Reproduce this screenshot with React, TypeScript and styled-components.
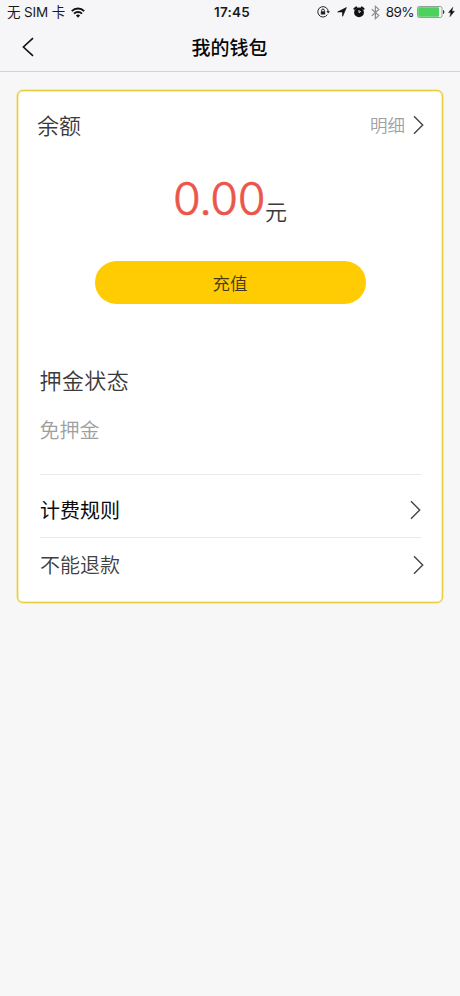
import React from "react";
import styled, { createGlobalStyle } from "styled-components";

const GlobalStyle = createGlobalStyle`
  * { box-sizing: border-box; }
  html, body { margin: 0; padding: 0; background: #f7f7f7; }
  body { font-family: "Noto Sans CJK SC", sans-serif; font-weight: 350; color: #3a3a3a; }
`;

const Screen = styled.div`
  width: 460px;
  height: 996px;
  background: #f7f7f7;
  overflow: hidden;
`;

const Header = styled.header`
  height: 72px;
  background: #f6f6f8;
  border-bottom: 1px solid #d3d3d5;
`;

const StatusBar = styled.div`
  display: grid;
  grid-template-columns: 1fr auto 1fr;
  align-items: center;
  height: 24px;
  padding: 0 5px 0 7px;
  color: #1a1a1a;
  font: 400 13.5px/24px Inter, "Noto Sans CJK SC", sans-serif;
`;

const Carrier = styled.div`
  display: flex;
  align-items: center;
  gap: 6px;
  letter-spacing: -0.15px;
  white-space: pre;
`;

const Clock = styled.div`
  padding-left: 2px;
  font-weight: 600;
  letter-spacing: 0.25px;
`;

const Indicators = styled.div`
  display: flex;
  align-items: center;
  justify-content: flex-end;
`;

const Percent = styled.span`
  margin: 0 3px 0 6px;
  letter-spacing: -0.55px;
`;

const Icon = styled.svg<{ $gap?: number }>`
  display: block;
  flex: none;
  margin-left: ${(p) => p.$gap ?? 0}px;
`;

const NavBar = styled.nav`
  display: grid;
  grid-template-columns: 60px 1fr 60px;
  align-items: center;
  height: 46px;
`;

const BackButton = styled.button`
  display: flex;
  width: 40px;
  padding: 0 0 1px 21px;
  border: 0;
  background: none;
`;

const Title = styled.h1`
  margin: 0 1px 0 0;
  text-align: center;
  color: #080808;
  font-size: 19px;
  line-height: 28px;
  font-weight: 500;
`;

const Card = styled.main`
  margin: 18px 17px 0;
  height: 513px;
  padding: 0 18px 0 19px;
  background: #fff;
  border: 1px solid #e9cf3e;
  border-radius: 6px;
  box-shadow: inset 0 0 0 0.5px #f0dc70, 0 0 0 0.5px #f0dc70;
`;

const BalanceHeader = styled.div`
  display: flex;
  align-items: center;
  justify-content: space-between;
  height: 68px;
`;

const Heading = styled.h2<{ $spacing?: number }>`
  margin: 0;
  padding-bottom: 2px;
  font-size: 22px;
  line-height: 32px;
  font-weight: 350;
  letter-spacing: ${(p) => p.$spacing ?? 0}px;
`;

const DetailLink = styled.div`
  display: flex;
  align-items: center;
  gap: 8px;
  color: #a0a0a0;
  font-size: 17.5px;
  line-height: 26px;
`;

const Amount = styled.div`
  display: flex;
  justify-content: center;
  align-items: baseline;
  height: 102px;
  padding: 12px 1px 0 0;
`;

const Figure = styled.span`
  color: #ec5549;
  font: 300 45px/56px Inter, sans-serif;
  letter-spacing: -0.45px;
  -webkit-text-stroke: 0.7px #ec5549;
`;

const Unit = styled.span`
  position: relative;
  top: 5px;
  font-size: 22px;
  line-height: 30px;
`;

const RechargeButton = styled.button`
  display: block;
  width: 271px;
  height: 43px;
  margin: 0 0 0 57.5px;
  padding: 0;
  border: 0;
  border-radius: 22px;
  background: #ffcb03;
  color: #443c18;
  font: 350 17.5px/43px "Noto Sans CJK SC", sans-serif;
`;

const Deposit = styled.section`
  margin: 0 3px 0 2.5px;
  height: 171px;
  padding-top: 59px;
  border-bottom: 1px solid #e9e9e9;
`;

const DepositState = styled.p`
  margin: 18px 0 0;
  color: #9e9e9e;
  font-size: 20px;
  line-height: 30px;
`;

const Row = styled.div<{ $tone: string; $height: number; $shift?: number; $weight?: number; $divided?: boolean }>`
  display: flex;
  align-items: center;
  justify-content: space-between;
  height: ${(p) => p.$height}px;
  margin: 0 ${(p) => p.$shift ?? 0}px 0 3px;
  padding-top: ${(p) => (p.$divided ? 7 : 0)}px;
  border-bottom: ${(p) => (p.$divided ? "1px solid #e9e9e9" : "0")};
  color: ${(p) => p.$tone};
  font-size: 20px;
  line-height: 30px;
  font-weight: ${(p) => p.$weight ?? 350};
`;

const Chevron = () => (
  <Icon width="11" height="20" viewBox="0 0 11 20" fill="none" stroke="#444" strokeWidth="1.4">
    <path d="M1 1.3 9.7 10 1 18.7" />
  </Icon>
);

const WifiIcon = () => (
  <Icon width="14" height="11" viewBox="0 0 14 11" fill="none" stroke="#111" strokeWidth="1.9">
    <path d="M.8 4.1a8.8 8.8 0 0 1 12.4 0M3 6.6a5.7 5.7 0 0 1 8 0" />
    <path d="M4.9 8.5a3 3 0 0 1 4.2 0L7 10.7Z" fill="#111" stroke="none" />
  </Icon>
);

const RotationLockIcon = () => (
  <Icon width="13" height="12" viewBox="0 0 13 12" fill="none" stroke="#222" strokeWidth="1">
    <path d="M10.4 8.6a5.2 5.2 0 1 1 .8-2.6" />
    <path d="M9.4 5.2h3.6l-1.8 2.3Z" fill="#222" stroke="none" />
    <path d="M4.7 5.5V4.3a1.3 1.3 0 0 1 2.6 0v1.2" />
    <path d="M3.8 5.3h4.4v3.2H3.8Z" fill="#222" stroke="none" />
  </Icon>
);

const LocationIcon = () => (
  <Icon $gap={7} width="10" height="10" viewBox="0 0 10 10" fill="#111" stroke="#111" strokeWidth=".7">
    <path d="M9.4.6 5.6 9.3V4.9H.7Z" />
  </Icon>
);

const AlarmIcon = () => (
  <Icon $gap={6} width="12" height="12" viewBox="0 0 12 12">
    <circle cx="6" cy="6.4" r="4.9" fill="#111" />
    <path d="M1.5 2.8 3.2 1.4M10.5 2.8 8.8 1.4" stroke="#111" strokeWidth="2" strokeLinecap="round" />
    <path d="M6 6.6V4M6 6.6 7.9 5.4" fill="none" stroke="#eee" strokeWidth="1" />
  </Icon>
);

const BluetoothIcon = () => (
  <Icon $gap={6} width="9" height="15" viewBox="0 0 9 15" fill="none" stroke="#8c8c8c" strokeWidth="1.2">
    <path d="M.8 4.2 7.8 10.6 4.4 13.7V1.3L7.8 4.4.8 10.8" />
  </Icon>
);

const BatteryIcon = () => (
  <Icon width="28" height="12" viewBox="0 0 28 12">
    <rect x=".5" y=".5" width="24.5" height="11" rx="1.8" fill="#f4f6f4" stroke="#8fa094" />
    <rect x="1.2" y="1.2" width="20.8" height="9.6" rx=".8" fill="#4cd15f" />
    <path d="M26 4c1.8.5 1.8 3.5 0 4Z" fill="#333" />
  </Icon>
);

const BoltIcon = () => (
  <Icon $gap={3} width="7" height="10" viewBox="0 0 7 10" fill="#111" stroke="#111" strokeWidth=".4">
    <path d="M4.8.3.5 5.6h2.3L1.9 9.7 6.5 4.2H3.9Z" />
  </Icon>
);

export default function App() {
  return (
    <>
      <GlobalStyle />
      <Screen>
        <Header>
          <StatusBar>
            <Carrier>
              无 SIM 卡
              <WifiIcon />
            </Carrier>
            <Clock>17:45</Clock>
            <Indicators>
              <RotationLockIcon />
              <LocationIcon />
              <AlarmIcon />
              <BluetoothIcon />
              <Percent>89%</Percent>
              <BatteryIcon />
              <BoltIcon />
            </Indicators>
          </StatusBar>
          <NavBar>
            <BackButton aria-label="返回">
              <Icon width="13" height="20" viewBox="0 0 13 20" fill="none" stroke="#111" strokeWidth="1.6">
                <path d="M12 1.2 2.4 10 12 18.8" />
              </Icon>
            </BackButton>
            <Title>我的钱包</Title>
          </NavBar>
        </Header>
        <Card>
          <BalanceHeader>
            <Heading>余额</Heading>
            <DetailLink>
              明细
              <Chevron />
            </DetailLink>
          </BalanceHeader>
          <Amount>
            <Figure>0.00</Figure>
            <Unit>元</Unit>
          </Amount>
          <RechargeButton>充值</RechargeButton>
          <Deposit>
            <Heading $spacing={0.4}>押金状态</Heading>
            <DepositState>免押金</DepositState>
          </Deposit>
          <Row $tone="#0b0b0b" $height={63} $shift={3} $weight={400} $divided>
            计费规则
            <Chevron />
          </Row>
          <Row $tone="#404040" $height={54}>
            不能退款
            <Chevron />
          </Row>
        </Card>
      </Screen>
    </>
  );
}
